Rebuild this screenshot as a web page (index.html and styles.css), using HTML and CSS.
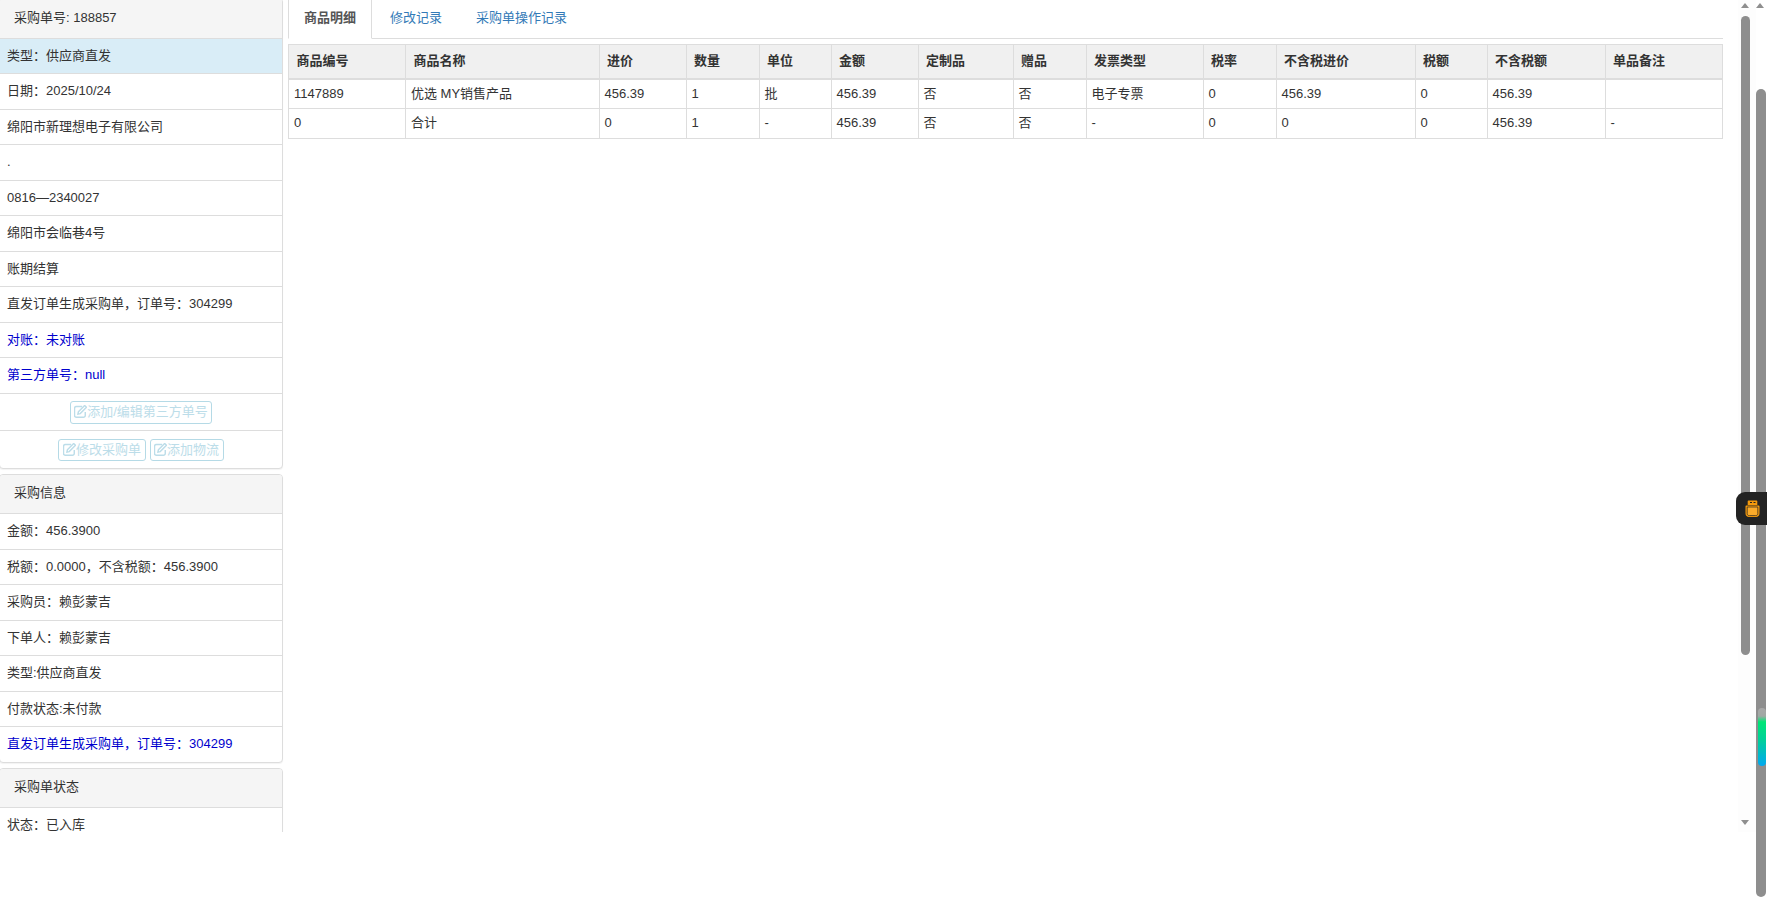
FILE: index.html
```html
<!DOCTYPE html>
<html lang="zh-CN">
<head>
<meta charset="utf-8">
<title>采购单详情</title>
<link rel="stylesheet" href="styles.css">
</head>
<body>
<div class="page">
  <div class="frame">
    <div class="content">
      <aside class="side">
        <section class="panel">
          <div class="panel-heading">采购单号: 188857</div>
          <ul class="list">
            <li class="item info">类型：供应商直发</li>
            <li class="item">日期：2025/10/24</li>
            <li class="item">绵阳市新理想电子有限公司</li>
            <li class="item">.</li>
            <li class="item">0816—2340027</li>
            <li class="item">绵阳市会临巷4号</li>
            <li class="item">账期结算</li>
            <li class="item">直发订单生成采购单，订单号：304299</li>
            <li class="item blue">对账：未对账</li>
            <li class="item blue">第三方单号：null</li>
            <li class="item actions">
              <button class="btn" type="button" disabled><svg class="edit" viewBox="0.500 0.800 12.700 12.700"><path d="M11.500 7.600v3.400a1.800 1.800 0 0 1-1.800 1.800H2.800A1.800 1.800 0 0 1 1 11V4.100a1.800 1.800 0 0 1 1.800-1.800h5.600"/><path d="M4.800 7.400 10.900 1.300l1.800 1.800-6.100 6.100-2.300.5z"/></svg>添加/编辑第三方单号</button>
            </li>
            <li class="item actions">
              <button class="btn" type="button" disabled><svg class="edit" viewBox="0.500 0.800 12.700 12.700"><path d="M11.500 7.600v3.400a1.800 1.800 0 0 1-1.800 1.800H2.800A1.800 1.800 0 0 1 1 11V4.100a1.800 1.800 0 0 1 1.800-1.800h5.600"/><path d="M4.800 7.400 10.900 1.300l1.800 1.800-6.100 6.100-2.300.5z"/></svg>修改采购单</button>
              <button class="btn" type="button" disabled><svg class="edit" viewBox="0.500 0.800 12.700 12.700"><path d="M11.500 7.600v3.400a1.800 1.800 0 0 1-1.800 1.800H2.800A1.800 1.800 0 0 1 1 11V4.100a1.800 1.800 0 0 1 1.800-1.800h5.600"/><path d="M4.800 7.400 10.900 1.300l1.800 1.800-6.100 6.100-2.300.5z"/></svg>添加物流</button>
            </li>
          </ul>
        </section>
        <section class="panel">
          <div class="panel-heading">采购信息</div>
          <ul class="list">
            <li class="item">金额：456.3900</li>
            <li class="item">税额：0.0000，不含税额：456.3900</li>
            <li class="item">采购员：赖彭蒙吉</li>
            <li class="item">下单人：赖彭蒙吉</li>
            <li class="item">类型:供应商直发</li>
            <li class="item">付款状态:未付款</li>
            <li class="item blue">直发订单生成采购单，订单号：304299</li>
          </ul>
        </section>
        <section class="panel">
          <div class="panel-heading">采购单状态</div>
          <ul class="list">
            <li class="item">状态：已入库</li>
          </ul>
        </section>
      </aside>
      <main class="main">
        <nav class="tabs">
          <a class="tab active">商品明细</a>
          <a class="tab">修改记录</a>
          <a class="tab">采购单操作记录</a>
        </nav>
        <table class="grid">
          <colgroup>
            <col class="c-no"><col class="c-name"><col class="c-price"><col class="c-qty"><col class="c-unit"><col class="c-amt"><col class="c-custom"><col class="c-gift"><col class="c-inv"><col class="c-rate"><col class="c-net"><col class="c-tax"><col class="c-netamt"><col class="c-note">
          </colgroup>
          <thead>
            <tr><th>商品编号</th><th>商品名称</th><th>进价</th><th>数量</th><th>单位</th><th>金额</th><th>定制品</th><th>赠品</th><th>发票类型</th><th>税率</th><th>不含税进价</th><th>税额</th><th>不含税额</th><th>单品备注</th></tr>
          </thead>
          <tbody>
            <tr><td>1147889</td><td>优选 MY销售产品</td><td>456.39</td><td>1</td><td>批</td><td>456.39</td><td>否</td><td>否</td><td>电子专票</td><td>0</td><td>456.39</td><td>0</td><td>456.39</td><td></td></tr>
            <tr><td>0</td><td>合计</td><td>0</td><td>1</td><td>-</td><td>456.39</td><td>否</td><td>否</td><td>-</td><td>0</td><td>0</td><td>0</td><td>456.39</td><td>-</td></tr>
          </tbody>
        </table>
      </main>
    </div>
    <div class="vbar frame-bar">
      <span class="arrow up"></span>
      <span class="thumb frame-thumb"></span>
      <span class="arrow down"></span>
    </div>
  </div>
  <div class="vbar page-bar">
    <span class="arrow up"></span>
    <span class="thumb page-thumb"><span class="glow"></span></span>
  </div>
  <div class="float-tool">
    <svg class="jar" viewBox="0 0 15 18">
      <path class="jar-cap" d="M3.500.5h8a.8.8 0 0 1 .8.8v3.700H2.700V1.300a.8.8 0 0 1 .8-.8z"/>
      <path class="jar-hole" d="M5 2h2v1H5zM8.500 2h2v1h-2z"/>
      <path class="jar-body" d="M1.300 5.600h12.400a.8.8 0 0 1 .8.8v7.200c0 2.200-1.600 3.400-3.600 3.400H4.100C2.100 17 .5 15.800 .5 13.600V6.400a.8.8 0 0 1 .8-.8z"/>
      <path class="jar-fill" d="M2.200 7h10.600v6.600c0 1.300-1 2-2.200 2H4.400c-1.200 0-2.200-.7-2.200-2z"/>
    </svg>
  </div>
</div>
</body>
</html>
```

FILE: styles.css
```css
* { box-sizing: border-box; }
html, body { margin: 0; padding: 0; height: 100%; overflow: hidden; background: #fff; }
body {
  font-family: "Liberation Sans", "Noto Sans CJK SC", sans-serif;
  font-size: 13px;
  line-height: 18.5px;
  color: #333;
}
.page { display: flex; height: 901px; position: relative; overflow: hidden; }
.frame { flex: 1; display: flex; height: 832px; overflow: hidden; }
.content { flex: 1; display: flex; align-items: flex-start; margin-top: -2px; }

.side { width: 283px; flex: none; }
.panel {
  width: 284px;
  margin: 0 0 5px -1px;
  background: #fff;
  border: 1px solid #ddd;
  border-radius: 4px;
  box-shadow: 0 1px 1px rgba(0, 0, 0, .05);
}
.panel-heading {
  padding: 9.500px 14px 10.500px;
  background: #f5f5f5;
  border-bottom: 1px solid #ddd;
  border-radius: 3px 3px 0 0;
  color: #333;
}
.list { list-style: none; margin: 0; padding: 0; }
.item { padding: 8px 7px; border-bottom: 1px solid #ddd; }
.item:last-child { border-bottom: 0; }
.item.info { background: #d9edf7; }
.item.blue { color: #0000cd; }
.item.actions { display: flex; justify-content: center; gap: 4px; padding-top: 7.500px; padding-bottom: 6.500px; }

.btn {
  display: block;
  padding: 1px 3.500px;
  font: inherit;
  color: #bcdde9;
  background: #fff;
  border: 1px solid #b5dae6;
  border-radius: 3px;
}
.edit {
  width: 13px;
  height: 13px;
  vertical-align: -2px;
  fill: none;
  stroke: #bcdde9;
  stroke-width: 1.4;
}

.main { width: 1435px; flex: none; margin-left: 5px; }
.tabs { display: flex; gap: 2px; border-bottom: 1px solid #ddd; margin-bottom: 5px; height: 41px; }
.tab {
  display: block;
  height: 41px;
  padding: 10px 15px;
  border: 1px solid transparent;
  color: #337ab7;
}
.tab.active {
  color: #555;
  font-weight: 700;
  background: #fff;
  border-color: #ddd #ddd #fff;
}

.grid { width: 1434px; table-layout: fixed; border-collapse: collapse; }
.c-no { width: 117px; }
.c-name { width: 193.500px; }
.c-price { width: 87px; }
.c-qty { width: 73px; }
.c-unit { width: 72px; }
.c-amt { width: 87px; }
.c-custom { width: 95px; }
.c-gift { width: 73px; }
.c-inv { width: 117px; }
.c-rate { width: 73px; }
.c-net { width: 139px; }
.c-tax { width: 72px; }
.c-netamt { width: 118px; }
.c-note { width: 117.500px; }
.grid th, .grid td { border: 1px solid #ddd; text-align: left; font-size: 13px; }
.grid th { padding: 7px 7.500px; background: #f0f0f0; border-bottom-width: 2px; font-weight: 700; }
.grid td { padding: 5px; }

.vbar { display: flex; flex-direction: column; flex: none; }
.frame-bar { width: 18px; height: 832px; padding-left: 3px; background: #fdfdfd; }
.page-bar { width: 11px; height: 901px; }
.arrow { display: block; width: 0; height: 0; flex: none; }
.arrow.up {
  margin-top: 3px;
  border-left: 4.500px solid transparent;
  border-right: 4.500px solid transparent;
  border-bottom: 5px solid #8e8e8e;
}
.arrow.down {
  margin-top: auto;
  margin-bottom: 7px;
  border-left: 4.500px solid transparent;
  border-right: 4.500px solid transparent;
  border-top: 5px solid #8e8e8e;
}
.thumb { display: block; width: 9px; background: #8e8e8e; border-radius: 5px; flex: none; }
.frame-thumb { margin-top: 8px; height: 639px; }
.page-thumb { margin-top: 81px; height: 808px; width: 10px; position: relative; }
.glow {
  position: absolute;
  left: 2px;
  right: 0;
  top: 619px;
  height: 58px;
  border-radius: 4px;
  background: linear-gradient(to bottom, #a8a8a8 0, #a0a8a4 14%, #00e676 24%, #00d09a 55%, #00a8f0 100%);
}

.float-tool {
  position: absolute;
  right: 0;
  top: 492px;
  width: 31px;
  height: 33px;
  display: flex;
  align-items: center;
  padding-left: 9px;
  background: #232323;
  border-radius: 9px 0 0 9px;
}
.jar { width: 15px; height: 18px; display: block; }
.jar-cap { fill: #f59a0c; }
.jar-hole { fill: #232323; }
.jar-body { fill: #f59a0c; }
.jar-fill { fill: #fbab2a; stroke: #232323; stroke-width: .7; }
```
